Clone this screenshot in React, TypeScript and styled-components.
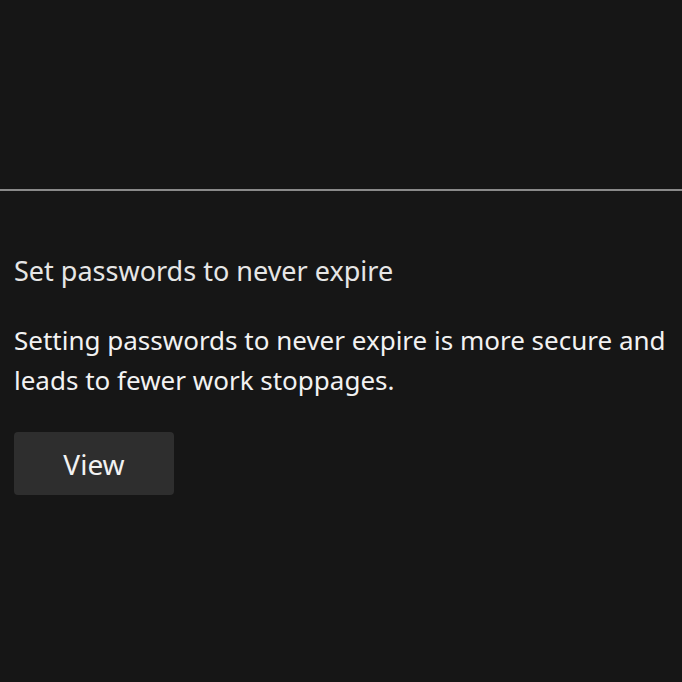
import styled, { createGlobalStyle } from "styled-components";

const GlobalStyle = createGlobalStyle`
  html, body {
    margin: 0;
    padding: 0;
    background: #161616;
  }
  body {
    font-family: "Noto Sans", "Open Sans", sans-serif;
  }
`;

const Page = styled.div`
  width: 682px;
  height: 682px;
  background: #161616;
  display: flex;
  flex-direction: column;
  overflow: hidden;
`;

const TopArea = styled.div`
  height: 189px;
`;

const Divider = styled.hr`
  margin: 0;
  border: none;
  height: 2px;
  background: #8a8a8a;
`;

const Content = styled.section`
  padding: 60px 14px 0;
  display: flex;
  flex-direction: column;
  align-items: flex-start;
`;

const Title = styled.h2`
  margin: 0;
  font-size: 27px;
  font-weight: 400;
  line-height: 40px;
  color: #e6e6e6;
`;

const Description = styled.p`
  margin: 29px 0 0;
  font-size: 26px;
  font-weight: 400;
  line-height: 40px;
  color: #f2f2f2;
`;

const ViewButton = styled.button`
  margin-top: 32px;
  width: 160px;
  height: 63px;
  border: none;
  border-radius: 4px;
  background: #2e2e2e;
  color: #f2f2f2;
  font-family: inherit;
  font-size: 28px;
  cursor: pointer;
`;

export default function App() {
  return (
    <>
      <GlobalStyle />
      <Page>
        <TopArea />
        <Divider />
        <Content>
          <Title>Set passwords to never expire</Title>
          <Description>
            Setting passwords to never expire is more secure and leads to fewer work stoppages.
          </Description>
          <ViewButton>View</ViewButton>
        </Content>
      </Page>
    </>
  );
}
